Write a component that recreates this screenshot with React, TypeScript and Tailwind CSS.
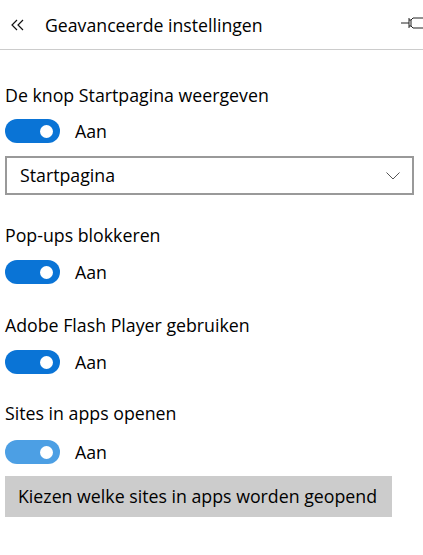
import React from 'react';

const font = { fontFamily: '"Open Sans", "Noto Sans", sans-serif' };

const Toggle: React.FC<{ dim?: boolean }> = ({ dim }) => (
  <div className="flex items-center h-6">
    <div
      className={`relative w-[55px] h-6 rounded-full ${dim ? 'bg-[#4c9fe4]' : 'bg-[#0a74d6]'}`}
    >
      <div className="absolute right-[7px] top-[5.5px] w-[13px] h-[13px] rounded-full bg-white" />
    </div>
    <span className="ml-[15px] text-[17.75px] text-black leading-6">Aan</span>
  </div>
);

const Label: React.FC<{ children: React.ReactNode; className?: string }> = ({ children, className }) => (
  <div className={`text-[17.75px] leading-6 text-black ${className ?? ''}`}>{children}</div>
);

export default function App() {
  return (
    <div className="w-[423px] h-[555px] bg-white overflow-hidden" style={font}>
      <header className="h-[50px] flex items-center border-b border-[#cccccc] relative">
        <svg className="ml-[11px]" width="13" height="12" viewBox="0 0 13 12">
          <path d="M6 1 L1 6 L6 11 M12 1 L7 6 L12 11" fill="none" stroke="#111" strokeWidth="1.2" />
        </svg>
        <h1 className="ml-[21px] text-[17.7px] text-black font-normal leading-6">Geavanceerde instellingen</h1>
        <svg className="absolute right-0 top-[16px]" width="22" height="14" viewBox="0 0 22 14">
          <path d="M0 7 H8 M8 2 V12 M8 4 H10 L12 2 H22 M8 10 H10 L12 12 H22 M10 4 V10" fill="none" stroke="#222" strokeWidth="1" />
        </svg>
      </header>

      <main className="px-[5px]">
        <Label className="mt-[33px]">De knop Startpagina weergeven</Label>
        <div className="mt-[12px]">
          <Toggle />
        </div>
        <div className="mt-[13px] w-[409px] h-[39px] border-2 border-[#999999] flex items-center justify-between pl-[13px] pr-[12px]">
          <span className="text-[17.75px] text-black">Startpagina</span>
          <svg width="14" height="8" viewBox="0 0 14 8">
            <path d="M0.5 0.5 L7 7 L13.5 0.5" fill="none" stroke="#555" strokeWidth="1" />
          </svg>
        </div>

        <Label className="mt-[28px]">Pop-ups blokkeren</Label>
        <div className="mt-[13px]">
          <Toggle />
        </div>

        <Label className="mt-[29px]">Adobe Flash Player gebruiken</Label>
        <div className="mt-[13px]">
          <Toggle />
        </div>

        <Label className="mt-[27px]">Sites in apps openen</Label>
        <div className="mt-[15px]">
          <Toggle dim />
        </div>

        <button className="mt-[12px] w-[387px] h-[41px] bg-[#cccccc] text-left pl-[13px] text-[17.75px] text-black">
          Kiezen welke sites in apps worden geopend
        </button>
      </main>
    </div>
  );
}
